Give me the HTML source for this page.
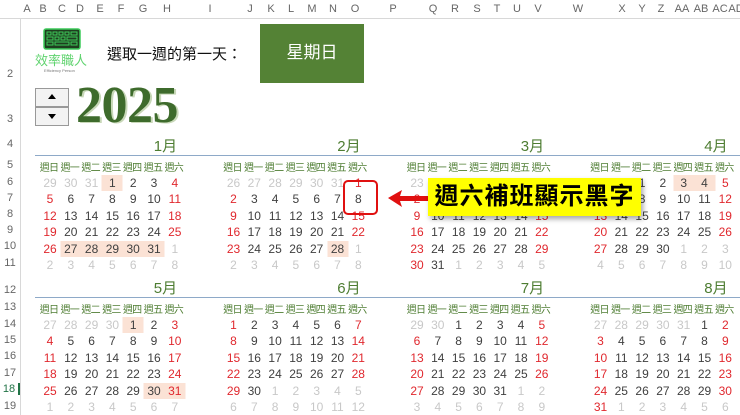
<!DOCTYPE html><html><head><meta charset="utf-8"><style>
body{margin:0;width:740px;height:415px;overflow:hidden;background:#fff;position:relative;font-family:"Liberation Sans","Noto Sans CJK TC",sans-serif}
.a{position:absolute;white-space:nowrap}
.hdr{position:absolute;left:0;top:0;width:740px;height:18px;background:#fff;border-bottom:1px solid #d8d8d8}
.rn{position:absolute;left:0;top:18px;width:20px;height:397px;border-right:1px solid #d8d8d8}
.cl{position:absolute;top:3px;font-size:11px;color:#666;transform:translateX(-50%);white-space:nowrap}
.rl{position:absolute;left:0;width:20px;text-align:center;font-size:11px;color:#666}
.d{position:absolute;width:21px;text-align:center;font-size:12px;line-height:16px;transform:translateX(-50%);white-space:nowrap}
.w{position:absolute;font-size:10px;color:#4e7d32;letter-spacing:-0.8px;transform:translateX(-50%);white-space:nowrap}
.m{position:absolute;font-size:15px;color:#4e7d32;white-space:nowrap}
</style></head><body>
<div class="hdr"></div><div class="rn"></div>
<div id="c"></div>
<svg class="a" style="left:43px;top:28px" width="38" height="22" viewBox="0 0 38 22"><rect x="1" y="1" width="36" height="20" rx="2" fill="#1f3d1f" stroke="#3dcc5a" stroke-width="1.5"/><g fill="none" stroke="#3dcc5a" stroke-width="1"><rect x="4" y="4" width="4" height="3"/><rect x="10" y="4" width="4" height="3"/><rect x="16" y="4" width="4" height="3"/><rect x="22" y="4" width="4" height="3"/><rect x="28" y="4" width="6" height="3"/><rect x="4" y="9" width="6" height="3"/><rect x="12" y="9" width="4" height="3"/><rect x="18" y="9" width="4" height="3"/><rect x="24" y="9" width="10" height="3"/><rect x="4" y="14" width="6" height="3"/><rect x="12" y="14" width="14" height="3"/><rect x="28" y="14" width="6" height="3"/></g></svg>
<div class="a" style="left:35px;top:50px;font-size:13px;color:#5fd36e">效率職人</div>
<div class="a" style="left:44px;top:68px;font-size:4px;color:#777">Efficiency Person</div>
<div class="a" style="left:107px;top:43px;font-size:15px;color:#111">選取一週的第一天：</div>
<div class="a" style="left:260px;top:24px;width:104px;height:59px;background:#548235;color:#fff;font-size:17px;text-align:center;line-height:58px">星期日</div>
<div class="a" style="left:35px;top:88px;width:34px;height:19px;background:#f3f3f3;border:1px solid #999;box-sizing:border-box"></div>
<div class="a" style="left:35px;top:107px;width:34px;height:19px;background:#f3f3f3;border:1px solid #999;box-sizing:border-box"></div>
<div class="a" style="left:48px;top:94px;width:0;height:0;border-left:4px solid transparent;border-right:4px solid transparent;border-bottom:5px solid #000"></div>
<div class="a" style="left:48px;top:114px;width:0;height:0;border-left:4px solid transparent;border-right:4px solid transparent;border-top:5px solid #000"></div>
<div class="a" style="left:76px;top:76px;font-family:'Liberation Serif',serif;font-weight:bold;font-size:52px;color:#3e6b2c;text-shadow:2px 1px 0 #c8d8b8;letter-spacing:-0.5px">2025</div>
<div class="a" style="left:343px;top:180px;width:35px;height:35px;border:2px solid #e01010;border-radius:5px;box-sizing:border-box"></div>
<svg class="a" style="left:384px;top:186px" width="48" height="26"><path d="M4 12 L18 4 L16 10 L46 10 L46 15 L16 15 L18 21 Z" fill="#e01010"/></svg>
<div class="a" style="left:428px;top:178px;width:213px;height:38px;background:#ffff00;box-shadow:2px 3px 5px rgba(0,0,0,.35);font-size:24px;font-weight:bold;line-height:38px;text-align:center;color:#000;letter-spacing:1px;z-index:5">週六補班顯示黑字</div>
<script>
(function(){
var c=document.getElementById('c'),h='';
var cols=[['A',27],['B',43],['C',62],['D',80],['E',100],['F',121],['G',143],['H',167],['I',210],['J',250],['K',271],['L',291],['M',312],['N',333],['O',355],['P',393],['Q',433],['R',455],['S',477],['T',497],['U',517],['V',538],['W',578],['X',622],['Y',642],['Z',661],['AA',682],['AB',701],['AC',720],['AD',736]];
cols.forEach(function(k){h+='<div class="cl" style="left:'+k[1]+'px">'+k[0]+'</div>'});
var rows=[[2,68],[3,113],[4,138],[5,159],[6,176],[7,192],[8,208],[9,224],[10,240],[11,257],[12,284],[13,301],[14,318],[15,334],[16,350],[17,367],[18,383],[19,400]];
rows.forEach(function(r){h+='<div class="rl" style="top:'+r[1]+'px'+(r[0]==18?';color:#217346;border-right:2px solid #217346;width:18px':'')+'">'+r[0]+'</div>'});
var wk=['週日','週一','週二','週三','週四','週五','週六'];
var hl={'0-1':1,'0-27':1,'0-28':1,'0-29':1,'0-30':1,'0-31':1,'1-28':1,'3-3':1,'3-4':1,'4-1':1,'4-30':1,'4-31':1};
for(var m=0;m<8;m++){
 var bx=50+(m%4)*183.5, ty=m<4?158:300;
 var rx=bx+6*20.8+3;
 h+='<div class="m" style="left:'+(rx-24)+'px;top:'+(ty-23)+'px">'+(m+1)+'月</div>';
 h+='<div class="a" style="left:'+(bx-15)+'px;top:'+(ty-3)+'px;width:'+(m%4==3?740-bx+15:183.5)+'px;border-top:1px solid #8ea9c8"></div>';
 for(var i=0;i<7;i++)h+='<div class="w" style="left:'+(bx+i*20.8-1)+'px;top:'+(ty+1)+'px">'+wk[i]+'</div>';
 var first=new Date(2025,m,1).getDay();
 for(var k=0;k<42;k++){
  var d=new Date(2025,m,1-first+k);
  var r=Math.floor(k/7),col=k%7;
  var x=bx+col*20.8,y=ty+17+r*16.4;
  var inm=d.getMonth()==m,n=d.getDate();
  var color=!inm?'#c8c8c8':((col==0||col==6)&&!(m==1&&n==8)?'#e0282e':'#404040');
  var bg=inm&&hl[m+'-'+n]?'background:#fbe2d5;':'';
  h+='<div class="d" style="left:'+x+'px;top:'+y+'px;color:'+color+';'+bg+'">'+n+'</div>';
 }
}
c.innerHTML=h;
})();
</script>
</body></html>
